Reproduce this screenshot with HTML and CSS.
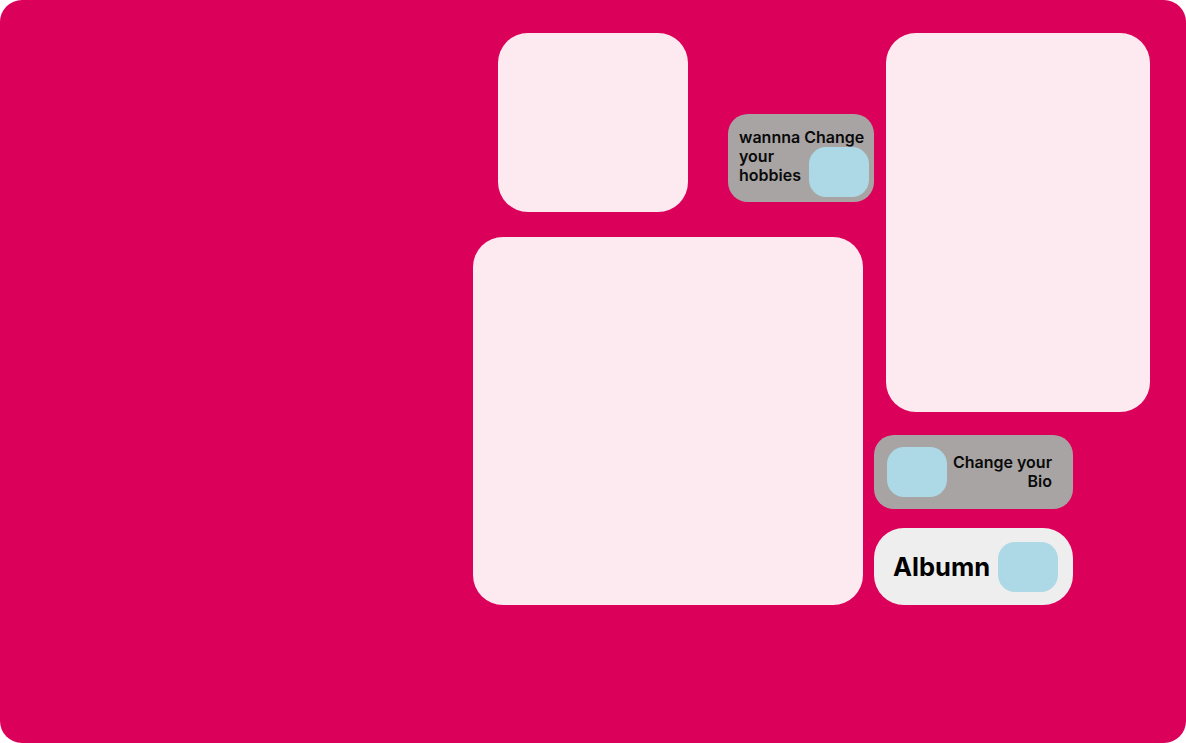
FILE: index.html
```html
<!DOCTYPE html>
<html>
<head>
	<title>Profile</title>
	<link rel="stylesheet" href="styles.css">
</head>
<body>
	<div class="board">
		<div class="tile tile-a"></div>
		<div class="pill pill-hobbies">
			<p class="pill-text">wannna Change<br>your<br>hobbies</p>
			<div class="chip"></div>
		</div>
		<div class="tile tile-c"></div>
		<div class="tile tile-b"></div>
		<div class="pill pill-bio">
			<div class="chip"></div>
			<p class="pill-text">Change your<br>Bio</p>
		</div>
		<div class="pill pill-album">
			<p class="album-title">Albumn</p>
			<div class="chip"></div>
		</div>
	</div>
</body>
</html>
```
FILE: styles.css
```css
*, *::after, *::before{
	box-sizing: border-box;
	margin: 0;
	padding: 0;
}
html, body{
	width: 100%;
	height: 100%;
	background: #ffffff;
	font-family: Inter, "Noto Sans", sans-serif;
}
.board{
	width: 1186px;
	height: 743px;
	background-color: #db0059;
	border-radius: 22px;
	padding: 33px 0 0 473px;
	display: grid;
	grid-template-columns: 25px 190px 40px 135px 11px 12px 187px 77px;
	grid-template-rows: 81px 88px 10px 25px 175px 23px 74px 19px 77px;
}
.tile{
	background-color: #fdeaf1;
	border-radius: 30px;
}
.tile-a{grid-column: 2 / 3; grid-row: 1 / 4;}
.tile-c{grid-column: 7 / 9; grid-row: 1 / 6;}
.tile-b{grid-column: 1 / 5; grid-row: 5 / 10;}

.pill{
	background-color: #a8a4a4;
	border-radius: 20px;
	color: #0a0a0a;
}
.pill-text{
	font-size: 16px;
	font-weight: 600;
	line-height: 19px;
	white-space: nowrap;
}
.chip{
	width: 60px;
	height: 50px;
	background-color: #add8e6;
	border-radius: 17px;
	flex-shrink: 0;
}
.pill-hobbies{
	grid-column: 4 / 6;
	grid-row: 2 / 3;
	display: grid;
	padding: 14px 5px 5px 11px;
}
.pill-hobbies > *{grid-area: 1 / 1;}
.pill-hobbies .chip{
	justify-self: end;
	align-self: end;
}
.pill-bio{
	grid-column: 6 / 8;
	grid-row: 7 / 8;
	display: flex;
	align-items: center;
	justify-content: space-between;
	padding: 0 21px 0 13px;
}
.pill-bio .pill-text{text-align: right;}
.pill-album{
	grid-column: 6 / 8;
	grid-row: 9 / 10;
	background-color: #eeeeee;
	border-radius: 30px;
	display: flex;
	align-items: center;
	justify-content: space-between;
	padding: 0 15px 0 19px;
}
.album-title{
	font-size: 25.5px;
	font-weight: 700;
	color: #000000;
	margin-top: -1px;
}
```
